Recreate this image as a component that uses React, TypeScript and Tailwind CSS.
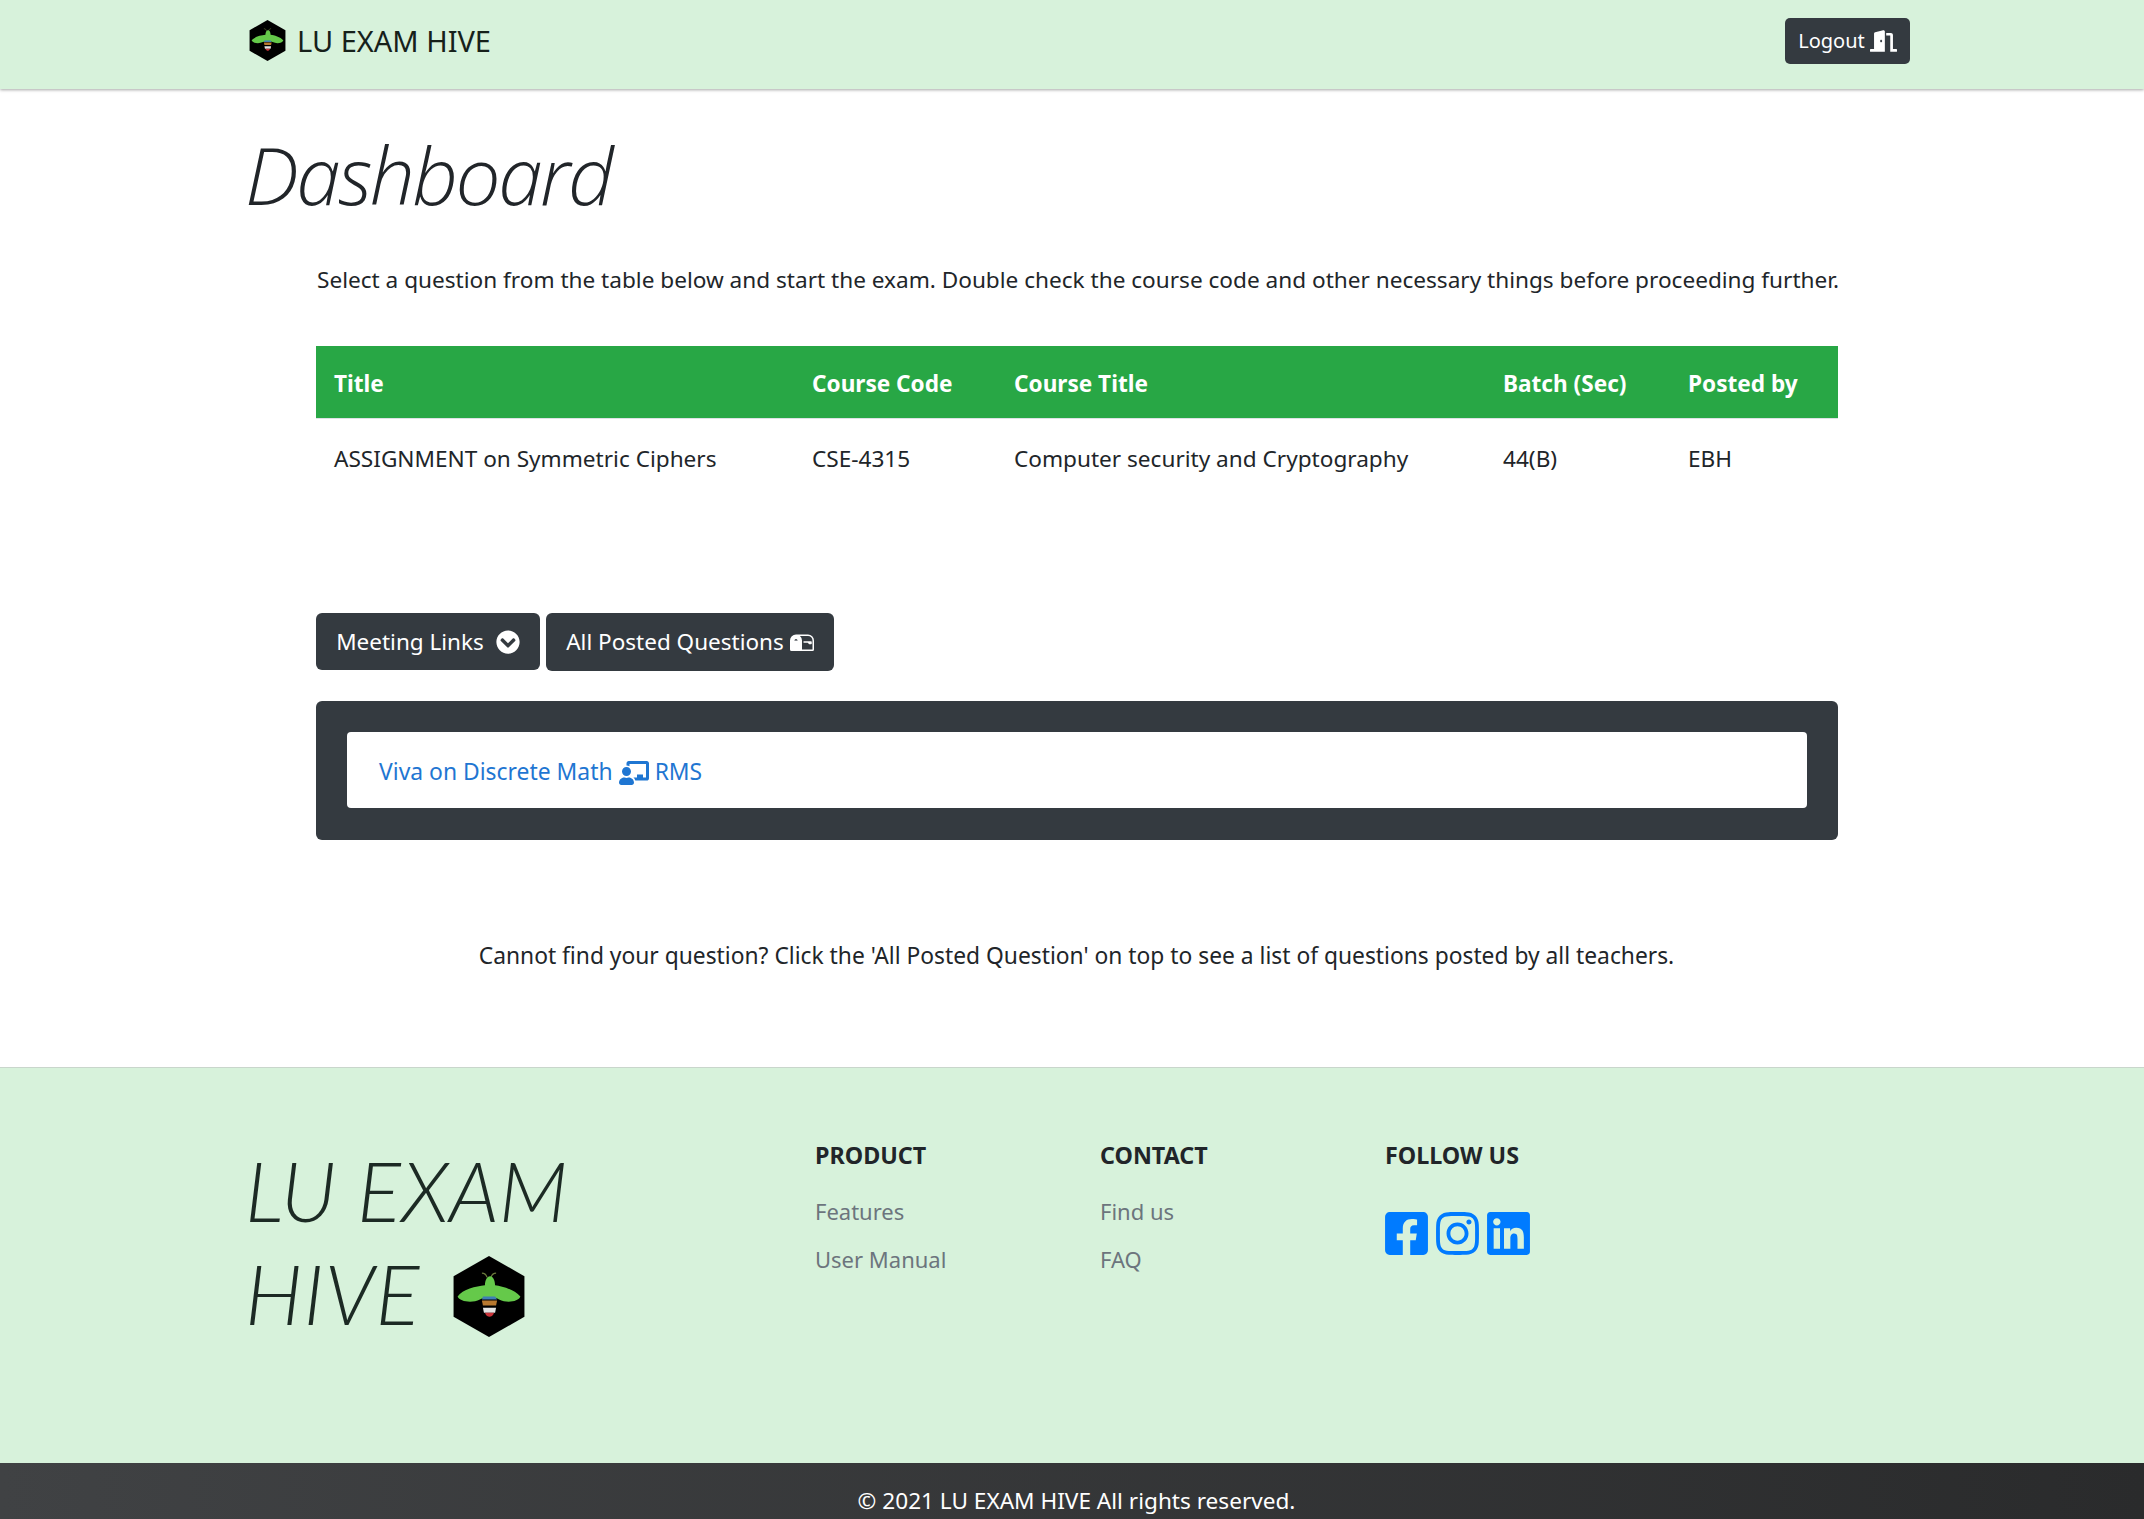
import { FaChalkboardTeacher, FaChevronCircleDown, FaDoorOpen, FaFacebookSquare, FaInstagram, FaLinkedin } from 'react-icons/fa';
import { BsMailbox2 } from 'react-icons/bs';

function BeeLogo({ className }: { className: string }) {
  return (
    <svg viewBox="0 0 70 80" className={className}>
      <polygon points="35,0 70,20 70,60 35,80 0,60 0,20" fill="#000" />
      <path d="M33 21 C32 18 30 17 28 17 M37 21 C38 18 40 17 42 17" stroke="#6b7a3c" strokeWidth="1.2" fill="none" />
      <path d="M36 20 C39 20 41 24 41 29 C48 30 60 33 66 40 C64 45 53 47 45 43 C41 40 31 40 26 43 C18 47 6 45 4 40 C9 33 22 30 31 29 C31 24 33 20 36 20 Z" fill="#65c94a" />
      <path d="M29 40 H41 L43 43 H28 Z" fill="#3f7fb5" />
      <path d="M28 44 H43 L42 49 H29 Z" fill="#b8782f" />
      <path d="M29 51 H42 L41 56 H30 Z" fill="#e4e4e4" />
      <path d="M31 56 H40 C39 59 37 60 35.5 60 C34 60 32 59 31 56 Z" fill="#c9343a" />
    </svg>
  );
}

const columns = [
  { label: 'Title', cell: 'ASSIGNMENT on Symmetric Ciphers', width: 'w-[478px]' },
  { label: 'Course Code', cell: 'CSE-4315', width: 'w-[202px]' },
  { label: 'Course Title', cell: 'Computer security and Cryptography', width: 'w-[489px]' },
  { label: 'Batch (Sec)', cell: '44(B)', width: 'w-[185px]' },
  { label: 'Posted by', cell: 'EBH', width: 'w-[168px]' },
];

export default function App() {
  return (
    <div className="min-h-screen bg-white text-[22.6px] text-[#212529] font-['Noto_Sans',sans-serif]">
      <nav className="h-[89px] bg-[#d7f2db] shadow-[0_1px_3px_rgba(0,0,0,0.35)] relative">
        <div className="h-full pl-[249px] pr-[234px] pb-[8px] flex items-center justify-between">
          <div className="flex items-center gap-[11px]">
            <BeeLogo className="w-[37px] h-[41px]" />
            <span className="text-[29px] text-[#16211a]">LU EXAM HIVE</span>
          </div>
          <button className="h-[46px] w-[125px] rounded-[5px] bg-[#343a40] text-white text-[20px] pt-[1px] flex items-center justify-center gap-[5px]">
            Logout <FaDoorOpen className="w-[27px] h-[22px]" />
          </button>
        </div>
      </nav>

      <main className="h-[978px]">
        <h1 className="pl-[245px] pt-[37px] h-[166px] text-[80px] leading-[96px] italic font-light text-[#212529] font-['Open_Sans',sans-serif] tracking-[-2.5px]">Dashboard</h1>
        <p className="pl-[317px] h-[91px] leading-[50px]">Select a question from the table below and start the exam. Double check the course code and other necessary things before proceeding further.</p>

        <div className="mx-[316px] w-[1522px]">
          <div className="flex h-[73px] pt-[3px] items-center bg-[#28a745] text-white font-bold border-b border-[#dee2e6]">
            {columns.map((c) => (
              <div key={c.label} className={`${c.width} pl-[18px]`}>{c.label}</div>
            ))}
          </div>
          <div className="flex h-[79px] pt-[1px] items-center">
            {columns.map((c) => (
              <div key={c.label} className={`${c.width} pl-[18px]`}>{c.cell}</div>
            ))}
          </div>
        </div>

        <div className="mx-[316px] w-[1522px] mt-[115px] flex gap-[6px]">
          <button className="h-[57px] w-[224px] rounded-[6px] bg-[#343a40] text-white text-[22.5px] pt-[1px] flex items-center justify-center gap-[12px]">
            Meeting Links <FaChevronCircleDown className="w-[24px] h-[24px]" />
          </button>
          <button className="h-[58px] w-[288px] rounded-[6px] bg-[#343a40] text-white text-[22.5px] flex items-center justify-center gap-[6px]">
            All Posted Questions <BsMailbox2 className="w-[24px] h-[24px]" />
          </button>
        </div>

        <div className="mx-[316px] w-[1522px] mt-[30px] h-[139px] rounded-[6px] bg-[#343a40] p-[31px]">
          <div className="h-[76px] rounded-[4px] bg-white pl-[32px] pt-[5px] flex items-center gap-[6px] text-[22.9px] text-[#1f76d2]">
            Viva on Discrete Math <FaChalkboardTeacher className="w-[30px] h-[30px]" /> RMS
          </div>
        </div>

        <p className="mt-[99px] text-center pl-[9px] text-[22.8px]">Cannot find your question? Click the 'All Posted Question' on top to see a list of questions posted by all teachers.</p>
      </main>

      <footer className="h-[396px] bg-[#d7f2db] border-t border-[#c9d6cc] pl-[245px] pt-[71px] flex">
        <div className="w-[570px] text-[82px] leading-[103px] italic font-light text-[#1c2a24] font-['Lato',sans-serif]">
          <div>LU EXAM</div>
          <div className="flex items-center gap-[32px] tracking-[1px]">HIVE <BeeLogo className="w-[72px] h-[81px] mt-[5px]" /></div>
        </div>
        <div className="w-[285px]">
          <h5 className="font-bold leading-[32px] text-[23.3px]">PRODUCT</h5>
          <div className="mt-[16px] text-[22px] text-[#6c757d] leading-[48px]">
            <div>Features</div>
            <div>User Manual</div>
          </div>
        </div>
        <div className="w-[285px]">
          <h5 className="font-bold leading-[32px] text-[23.3px]">CONTACT</h5>
          <div className="mt-[16px] text-[22px] text-[#6c757d] leading-[48px]">
            <div>Find us</div>
            <div>FAQ</div>
          </div>
        </div>
        <div>
          <h5 className="font-bold leading-[32px] text-[23.3px]">FOLLOW US</h5>
          <div className="mt-[38px] flex gap-[8px] text-[#007bff]">
            <FaFacebookSquare className="w-[43px] h-[49px]" />
            <FaInstagram className="w-[43px] h-[49px]" />
            <FaLinkedin className="w-[43px] h-[49px]" />
          </div>
        </div>
      </footer>

      <div className="h-[56px] bg-gradient-to-r from-[#404244] to-[#2a2b2c] text-white text-center pl-[9px] leading-[75px]">© 2021 LU EXAM HIVE All rights reserved.</div>
    </div>
  );
}
